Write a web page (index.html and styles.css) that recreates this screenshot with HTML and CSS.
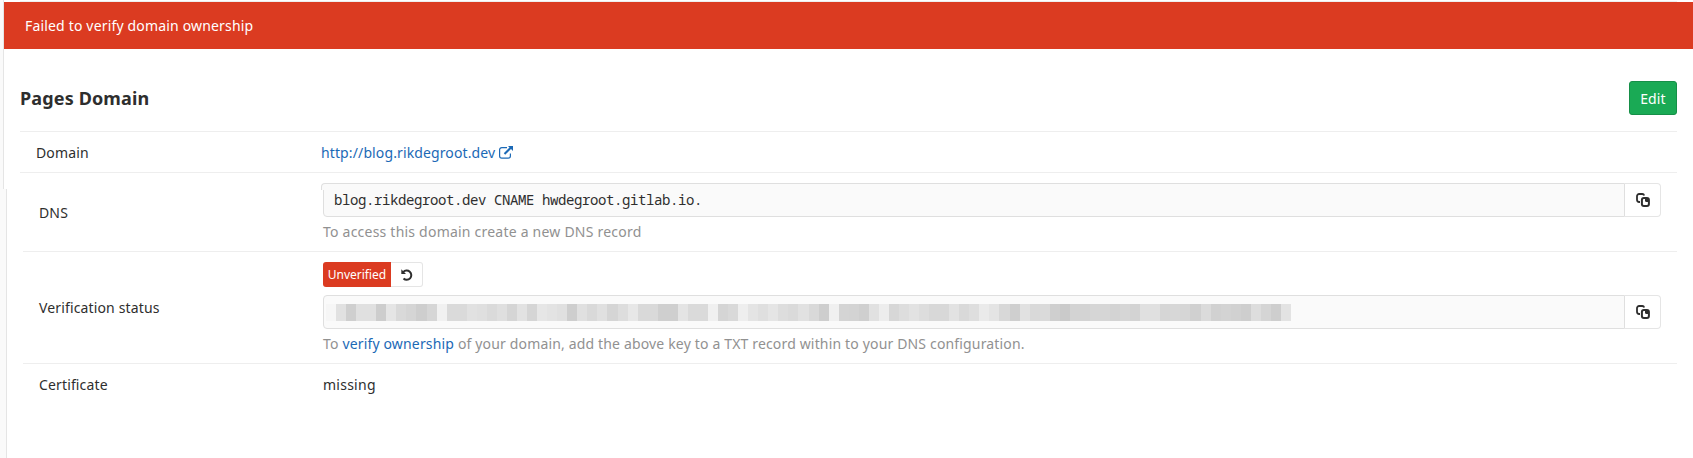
FILE: index.html
```
<!DOCTYPE html>
<html lang="en">
<head>
<meta charset="utf-8">
<title>Pages Domain</title>
<link rel="stylesheet" href="styles.css">
</head>
<body>
<svg class="defs" width="0" height="0">
  <symbol id="copy" viewBox="0 0 14 14">
    <path d="M4 9H3.2A2.2 2.2 0 0 1 1 6.800V3.200A2.200 2.200 0 0 1 3.200 1H6.300A2.200 2.200 0 0 1 8.200 2.500" fill="none" stroke="currentColor" stroke-width="1.800"/>
    <rect x="5.900" y="5" width="7" height="8" rx="2" fill="none" stroke="currentColor" stroke-width="2"/>
    <path d="M9 5h2.500L13 6.500V9H10.500A1.500 1.500 0 0 1 9 7.500z" fill="currentColor"/>
  </symbol>
</svg>
<div class="rail"><div class="rail-top"></div><div class="rail-bottom"></div></div>
<div class="topline"></div>
<div class="alert">Failed to verify domain ownership</div>
<main class="content">
  <header class="header">
    <h3 class="title">Pages Domain</h3>
    <button class="edit">Edit</button>
  </header>
  <section class="row row-domain">
    <div class="label">Domain</div>
    <div class="value"><a class="link" href="#">http://blog.rikdegroot.dev</a><svg class="ext" width="14" height="13" viewBox="0 0 14 13"><path d="M8 1.600H2.800A2.200 2.200 0 0 0 .600 3.800v6.200a2.200 2.200 0 0 0 2.200 2.200h6.400a2.200 2.200 0 0 0 2.200-2.200V7.500" fill="none" stroke="currentColor" stroke-width="1.200"/><path d="M5.500 8 12 1.500" stroke="currentColor" stroke-width="2"/><path d="M9 0h5v5z" fill="currentColor"/></svg></div>
  </section>
  <section class="row row-dns">
    <div class="label">DNS</div>
    <div class="value">
      <div class="group notched"><div class="input">blog.rikdegroot.dev CNAME hwdegroot.gitlab.io.</div><button class="copy"><svg width="14" height="14"><use href="#copy"/></svg></button></div>
      <p class="help help-dns">To access this domain create a new DNS record</p>
    </div>
  </section>
  <section class="row row-verify">
    <div class="label">Verification status</div>
    <div class="value">
      <div class="status"><span class="badge">Unverified</span><button class="retry"><svg width="12" height="12" viewBox="0 0 12 12"><path d="M2.200 3.200A4.600 4.600 0 1 1 2.500 9.500" fill="none" stroke="currentColor" stroke-width="2"/><path d="M.300.300V5H5z" fill="currentColor"/></svg></button></div>
      <div class="group"><div class="input masked"><svg id="mask" width="966" height="17"></svg></div><button class="copy"><svg width="14" height="14"><use href="#copy"/></svg></button></div>
      <p class="help">To <a class="link" href="#">verify ownership</a> of your domain, add the above key to a TXT record within to your DNS configuration.</p>
    </div>
  </section>
  <section class="row row-cert">
    <div class="label">Certificate</div>
    <div class="value">missing</div>
  </section>
</main>
<script src="mask.js"></script>
</body>
</html>
```
FILE: styles.css
```
* { box-sizing: border-box; }
body {
  margin: 0;
  height: 458px;
  overflow: hidden;
  display: grid;
  grid-template-columns: 4px 1fr;
  grid-template-rows: 2px 47px 1fr;
  background: #fff;
  color: #2e2e2e;
  font: 14px/20px "Noto Sans", sans-serif;
  letter-spacing: .14px;
}
.defs { position: absolute; }
.rail { grid-column: 1; grid-row: 1 / 4; width: 7px; display: flex; flex-direction: column; }
.rail-top { width: 4px; height: 189px; background: #fafafa; border-right: 1px solid #e5e5e5; }
.rail-bottom { flex: 1; background: #fafafa; border-right: 1px solid #e5e5e5; }
.topline { grid-column: 2; grid-row: 1; height: 1px; margin: 1px 16px 0; background: #eee; }
.alert { grid-column: 2; grid-row: 2; background: #db3b21; color: #fff; padding: 14px 21px; letter-spacing: .17px; }
.content { grid-column: 2; grid-row: 3; padding: 0 16px; }
.header { height: 82px; padding-top: 8px; display: flex; align-items: center; justify-content: space-between; }
.title { margin: 8px 0 0; font-size: 18px; line-height: 24px; font-weight: 700; }
.edit {
  width: 48px; height: 34px; margin-top: 8px; padding: 1px 0 0;
  border: 1px solid #168f48; border-radius: 3px;
  background: #1aaa55; color: #fff; font: inherit; letter-spacing: .14px;
}
.row { display: grid; grid-template-columns: 284px 1fr; align-items: center; border-top: 1px solid #eee; margin-left: 3px; padding: 10px 16px 0 16px; }
.label { line-height: 20px; }
.row-domain { height: 41px; margin-left: 0; padding: 2px 16px 0; }
.row-domain .value { display: flex; align-items: center; padding-left: 1px; letter-spacing: .12px; }
.row-dns { height: 79px; margin-left: 0; padding-left: 19px; }
.row-verify { height: 112px; }
.row-cert { height: 42px; padding-top: 0; }
.row-cert .value { letter-spacing: .250px; }
.row-dns, .row-verify { align-items: start; }
.row-dns .label { padding-top: 20px; }
.row-verify .label { padding-top: 36px; }
.link { color: #1b69b6; text-decoration: none; }
.ext { margin-left: 4px; margin-top: -1px; color: #1b69b6; }
.group { display: flex; height: 34px; position: relative; }
.notched::before {
  content: ""; position: absolute; left: -2px; top: 0; width: 8px; height: 6px;
  background: #fafafa; border: 1px solid #dfdfdf; border-width: 1px 0 0 1px; border-radius: 4px 0 0 0;
}
.input {
  flex: 1; border: 1px solid #dfdfdf; border-radius: 4px 0 0 4px;
  background: #fafafa; padding: 6px 10px; white-space: pre;
  font: 14px/20px "Noto Sans Mono", "DejaVu Sans Mono", monospace; letter-spacing: -.4px;
}
.masked { padding: 8px 2px; }
.masked svg { display: block; }
.copy {
  width: 36px; padding: 0; border: 1px solid #e5e5e5; border-left: 0; border-radius: 0 4px 4px 0;
  background: #fff; color: #2e2e2e; display: flex; align-items: center; justify-content: center;
}
.help { margin: 5px 0 0; color: #919191; letter-spacing: .16px; }
.help-dns { letter-spacing: .22px; }
.status { display: flex; height: 25px; margin-bottom: 8px; }
.badge { width: 68px; background: #db3b21; color: #fff; border-radius: 3px 0 0 3px; font-size: 12px; line-height: 25px; text-align: center; letter-spacing: 0; }
.retry {
  width: 32px; padding: 0; border: 1px solid #e5e5e5; border-left: 0; border-radius: 0 3px 3px 0;
  background: #fff; color: #2e2e2e; display: flex; align-items: center; justify-content: center;
}
```
FILE: mask.js
```
// Grey level of each block over the hidden verification key.
const tones = [
  246, 225, 207, 224, 224, 205, 229, 217, 213, 206, 214, 241, 218, 218, 225, 223, 218, 223, 213, 226, 213, 230, 227, 224, 206, 224, 217, 224, 213, 221, 231, 217,
  217, 207, 207, 228, 218, 218, 240, 213, 217, 238, 228, 223, 229, 221, 218, 225, 217, 206, 240, 212, 211, 207, 225, 237, 215, 221, 226, 221, 216, 216, 226, 217, 222, 234, 228, 216, 207,
  225, 217, 218, 207, 202, 211, 211, 214, 214, 211, 214, 211, 224, 224, 214, 215, 214, 208, 219, 209, 211, 209, 206, 221, 213, 206, 227
];
const mask = document.getElementById("mask");
const step = 965 / tones.length;
tones.forEach((tone, i) => {
  const block = document.createElementNS("http://www.w3.org/2000/svg", "rect");
  const left = Math.round(i * step);
  block.setAttribute("x", left);
  block.setAttribute("width", Math.round((i + 1) * step) - left);
  block.setAttribute("height", 17);
  block.setAttribute("fill", `rgb(${tone},${tone},${tone})`);
  mask.appendChild(block);
});
```
